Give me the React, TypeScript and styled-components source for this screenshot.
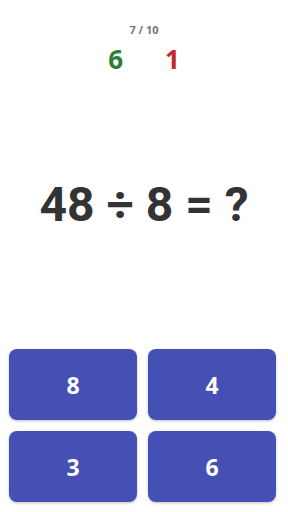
import React from "react";
import styled, { createGlobalStyle } from "styled-components";

const GlobalStyle = createGlobalStyle`
  html, body { margin: 0; padding: 0; background: #ffffff; }
  body { font-family: "Open Sans", "Noto Sans", sans-serif; }
  * { box-sizing: border-box; }
`;

const Screen = styled.div`
  width: 288px;
  height: 512px;
  display: flex;
  flex-direction: column;
  background: #ffffff;
`;

const Header = styled.header`
  display: flex;
  flex-direction: column;
  align-items: center;
  padding-top: 22px;
`;

const Progress = styled.div`
  font-family: "Open Sans", sans-serif;
  font-weight: 700;
  font-size: 11px;
  line-height: 16px;
  color: #757575;
`;

const ScoreRow = styled.div`
  display: flex;
  justify-content: center;
  gap: 42px;
  margin-top: 5px;
`;

const Score = styled.span<{ $tone: "good" | "bad" }>`
  font-family: "Open Sans", sans-serif;
  font-weight: 700;
  font-size: 26px;
  line-height: 32px;
  color: ${(p) => (p.$tone === "good" ? "#2e7d32" : "#c62828")};
`;

const Stage = styled.main`
  flex: 1;
  display: flex;
  align-items: center;
  justify-content: center;
  padding-bottom: 16px;
`;

const Equation = styled.div`
  font-family: "Roboto", sans-serif;
  font-weight: 700;
  font-size: 48px;
  color: #333333;
  white-space: pre;
`;

const Answers = styled.div`
  display: grid;
  grid-template-columns: 128px 128px;
  grid-auto-rows: 71px;
  column-gap: 11px;
  row-gap: 11px;
  padding: 0 12px 10px 9px;
`;

const AnswerButton = styled.button`
  border: none;
  border-radius: 8px;
  background: #4550b4;
  color: #ffffff;
  font-family: "Open Sans", sans-serif;
  font-weight: 700;
  font-size: 23px;
  box-shadow: 0 1px 3px rgba(0, 0, 0, 0.25);
  cursor: pointer;
  padding: 0;
`;

export default function App() {
  const answers = [8, 4, 3, 6];
  return (
    <>
      <GlobalStyle />
      <Screen>
        <Header>
          <Progress>7 / 10</Progress>
          <ScoreRow>
            <Score $tone="good">6</Score>
            <Score $tone="bad">1</Score>
          </ScoreRow>
        </Header>
        <Stage>
          <Equation>48 ÷ 8 = ?</Equation>
        </Stage>
        <Answers>
          {answers.map((a) => (
            <AnswerButton key={a}>{a}</AnswerButton>
          ))}
        </Answers>
      </Screen>
    </>
  );
}
